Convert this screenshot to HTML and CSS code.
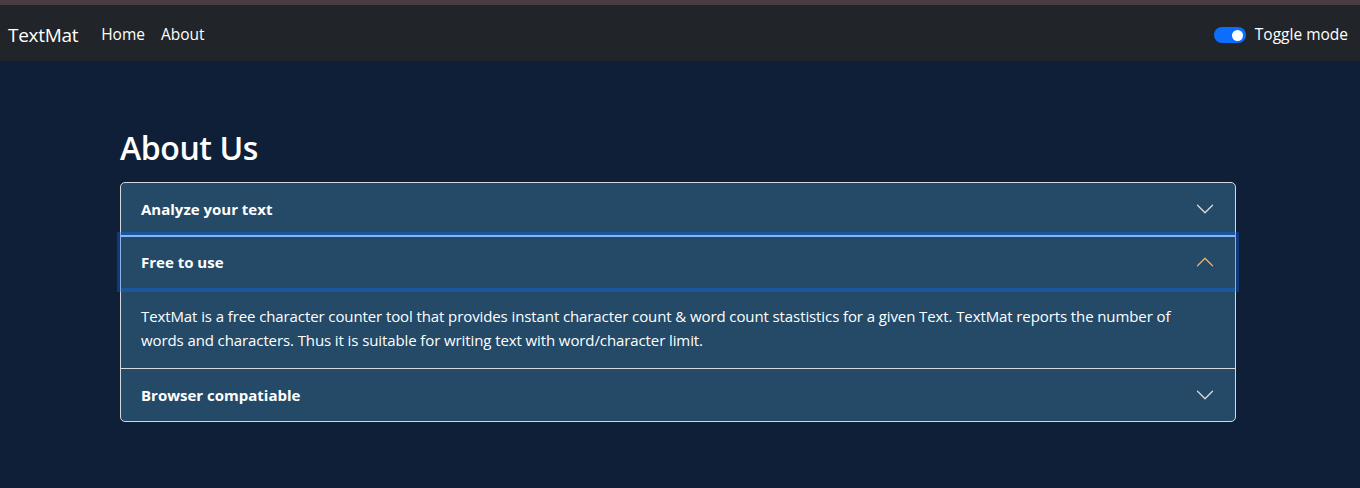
FILE: index.html
```html
<!DOCTYPE html>
<html lang="en">
<head>
<meta charset="utf-8">
<title>TextMat - About</title>
<link rel="stylesheet" href="styles.css">
</head>
<body>
<div class="topstrip"></div>
<nav class="navbar">
  <div class="nav-left">
    <a class="brand" href="#">TextMat</a>
    <a class="nav-link" href="#">Home</a>
    <a class="nav-link" href="#">About</a>
  </div>
  <label class="switch">
    <span class="switch-track"><span class="switch-knob"></span></span>
    <span class="switch-label">Toggle mode</span>
  </label>
</nav>
<main class="container">
  <h1 class="title">About Us</h1>
  <div class="accordion">
    <div class="acc-item">
      <button class="acc-btn">
        <span>Analyze your text</span>
        <svg class="chev" viewBox="0 0 16 16"><path fill-rule="evenodd" d="M1.646 4.646a.5.5 0 0 1 .708 0L8 10.293l5.646-5.647a.5.5 0 0 1 .708.708l-6 6a.5.5 0 0 1-.708 0l-6-6a.5.5 0 0 1 0-.708z"/></svg>
      </button>
    </div>
    <div class="acc-item">
      <button class="acc-btn open focus">
        <span>Free to use</span>
        <svg class="chev chev-open" viewBox="0 0 16 16"><path fill-rule="evenodd" d="M1.646 4.646a.5.5 0 0 1 .708 0L8 10.293l5.646-5.647a.5.5 0 0 1 .708.708l-6 6a.5.5 0 0 1-.708 0l-6-6a.5.5 0 0 1 0-.708z"/></svg>
      </button>
      <div class="acc-body">TextMat is a free character counter tool that provides instant character count &amp; word count stastistics for a given Text. TextMat reports the number of words and characters. Thus it is suitable for writing text with word/character limit.</div>
    </div>
    <div class="acc-item">
      <button class="acc-btn">
        <span>Browser compatiable</span>
        <svg class="chev" viewBox="0 0 16 16"><path fill-rule="evenodd" d="M1.646 4.646a.5.5 0 0 1 .708 0L8 10.293l5.646-5.647a.5.5 0 0 1 .708.708l-6 6a.5.5 0 0 1-.708 0l-6-6a.5.5 0 0 1 0-.708z"/></svg>
      </button>
    </div>
  </div>
</main>
</body>
</html>
```
FILE: styles.css
```css
* { box-sizing: border-box; }
html, body { margin: 0; padding: 0; }
body {
  background: #0f1f38;
  color: #fff;
  font-family: "Open Sans", "Noto Sans", sans-serif;
  font-size: 16px;
  line-height: 1.5;
  height: 488px;
  overflow: hidden;
}
.topstrip { height: 5px; background: #4a3c42; }
.navbar {
  height: 56px;
  background: #212529;
  display: flex;
  align-items: center;
  justify-content: space-between;
  padding: 4px 12px 0 8px;
}
.nav-left { display: flex; align-items: center; }
.brand {
  color: #fff;
  text-decoration: none;
  font-size: 19px;
  margin-right: 23px;
  letter-spacing: -0.3px;
}
.nav-link {
  color: #fff;
  text-decoration: none;
  font-size: 15.5px;
  margin-right: 16px;
}
.switch { display: flex; align-items: center; gap: 9px; }
.switch-track {
  width: 32px; height: 16px;
  border-radius: 8px;
  background: #0d6efd;
  display: flex;
  align-items: center;
  justify-content: flex-end;
  padding-right: 3px;
}
.switch-knob { width: 11px; height: 11px; border-radius: 50%; background: #fff; }
.switch-label { font-size: 15.5px; }
.container { width: 1116px; margin: 0 0 0 120px; padding-top: 68px; }
.title {
  margin: 0 0 15px;
  font-size: 32px;
  font-weight: 600;
  line-height: 38px;
  letter-spacing: -0.4px;
}
.accordion {
  border: 1px solid #d6d8dc;
  border-radius: 5px;
  background: #244a67;
}
.acc-item + .acc-item { border-top: 1px solid #d6d8dc; }
.acc-btn {
  width: 100%;
  display: flex;
  align-items: center;
  justify-content: space-between;
  background: transparent;
  border: 0;
  color: #fff;
  font-family: inherit;
  font-size: 15px;
  font-weight: 700;
  line-height: 20px;
  padding: 16px 20px;
  text-align: left;
  position: relative;
}
.acc-btn.focus {
  box-shadow: 0 0 0 4px rgba(13,110,253,0.35), inset 0 1px 0 #86b7fe;
  z-index: 3;
}
.chev { width: 20px; height: 20px; fill: #dedad6; flex: none; }
.chev-open { transform: rotate(180deg); fill: #eeb068; }
.acc-body {
  padding: 16px 20px 16px;
  font-size: 15px;
  letter-spacing: -0.1px;
  line-height: 24px;
}
```
